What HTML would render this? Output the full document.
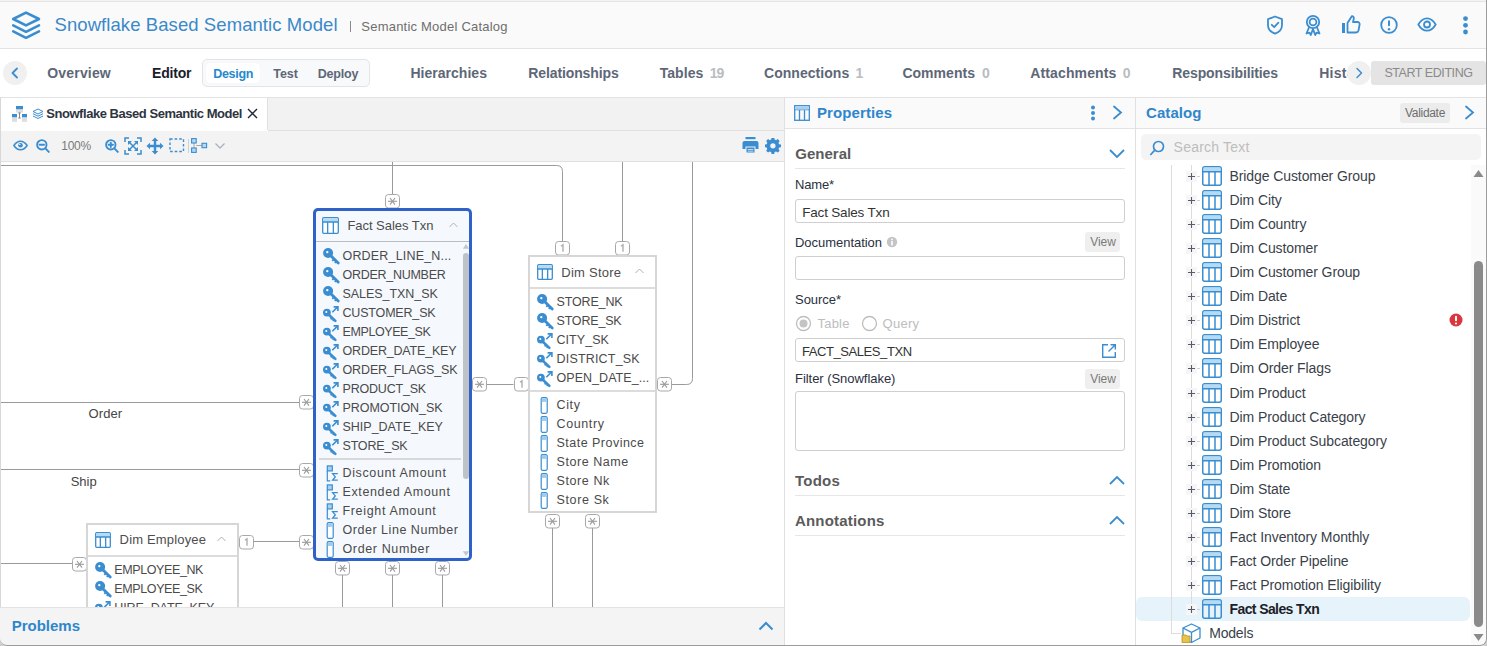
<!DOCTYPE html>
<html><head><meta charset="utf-8">
<style>
html,body{margin:0;padding:0;}
body{width:1487px;height:646px;position:relative;overflow:hidden;background:#cfcfcf;font-family:"Liberation Sans",sans-serif;}
.a{position:absolute;}
.t{position:absolute;white-space:nowrap;line-height:1;}
</style></head><body>
<div class="a" style="left:0;top:0;width:1487px;height:646px;border-radius:0 0 7px 7px;overflow:hidden;background:#fff"><div class="a" style="left:0px;top:0px;width:1487px;height:48px;background:#fafafa"></div><div class="a" style="left:0px;top:0px;width:1487px;height:1px;background:#f3f3f3"></div><div class="a" style="left:0px;top:1px;width:1487px;height:1px;background:#e4e4e4"></div><div class="a" style="left:0px;top:48px;width:1487px;height:1px;background:#e2e2e2"></div><svg class="a" style="left:11px;top:11px;" width="30" height="29" viewBox="0 0 30 29"><g fill="none" stroke="#3a8dd0" stroke-width="2.6" stroke-linejoin="round" stroke-linecap="round"><path d="M15 1.6 L28 8 L15 14.4 L2.2 8 Z"/><path d="M2.2 14.4 L15 20.8 L28 14.4"/><path d="M2.2 20.4 L15 26.8 L28 20.4"/></g></svg><div class="t" style="left:54.50px;top:16.00px;font-size:18.5px;color:#3b89c9;letter-spacing:0.079px;">Snowflake Based Semantic Model</div><div class="a" style="left:349.5px;top:20.5px;width:1.3px;height:11px;background:#8a8a8a"></div><div class="t" style="left:361.30px;top:20.00px;font-size:13px;color:#6e6e6e;letter-spacing:0.219px;">Semantic Model Catalog</div><svg class="a" style="left:1266px;top:15px;" width="18" height="20" viewBox="0 0 18 20"><g fill="none" stroke="#3a8dd0" stroke-width="1.8" stroke-linecap="round" stroke-linejoin="round"><path d="M9 1.5 L16 4.2 V10 C16 14.5 12.8 17.3 9 18.6 C5.2 17.3 2 14.5 2 10 V4.2 Z"/><path d="M5.8 9.8 L8.2 12.2 L12.4 7.6"/></g></svg><svg class="a" style="left:1304px;top:14px;" width="18" height="22" viewBox="0 0 18 22"><g fill="none" stroke="#3a8dd0" stroke-width="1.8" stroke-linecap="round" stroke-linejoin="round"><circle cx="9" cy="8" r="6.2"/><circle cx="9" cy="8" r="3.4"/><path d="M5.2 13 L2.5 19.5 L5.5 18.6 L6.8 21 L9 15"/><path d="M12.8 13 L15.5 19.5 L12.5 18.6 L11.2 21 L9 15"/></g></svg><svg class="a" style="left:1341px;top:15px;" width="20" height="19" viewBox="0 0 20 19"><g fill="#3a8dd0"><rect x="1" y="8" width="3" height="10"/></g><g fill="none" stroke="#3a8dd0" stroke-width="1.8" stroke-linecap="round" stroke-linejoin="round"><path d="M6.5 17.5 H15 C16.3 17.5 17.2 16.6 17.5 15.5 L18.6 9.6 C18.9 8.2 17.9 7 16.5 7 H12 L12.8 3.6 C13.1 2.3 12.1 1 10.8 1.2 L6.5 8 Z"/></g></svg><svg class="a" style="left:1380px;top:16px;" width="18" height="18" viewBox="0 0 18 18"><g fill="none" stroke="#3a8dd0" stroke-width="1.8" stroke-linecap="round" stroke-linejoin="round"><circle cx="9" cy="9" r="7.8"/></g><g fill="#3a8dd0"><rect x="8" y="4.3" width="2" height="6" rx="1"/><circle cx="9" cy="13.2" r="1.2"/></g></svg><svg class="a" style="left:1417px;top:17px;" width="20" height="15" viewBox="0 0 20 15"><g fill="none" stroke="#3a8dd0" stroke-width="1.8" stroke-linecap="round" stroke-linejoin="round"><path d="M1.3 7.5 C4 2.8 7 1.3 10 1.3 C13 1.3 16 2.8 18.7 7.5 C16 12.2 13 13.7 10 13.7 C7 13.7 4 12.2 1.3 7.5 Z"/><circle cx="10" cy="7.5" r="3"/></g></svg><svg class="a" style="left:1461px;top:16px;" width="9" height="19" viewBox="0 0 9 19"><g fill="#3a8dd0"><circle cx="4.5" cy="2.6" r="2.4"/><circle cx="4.5" cy="9.3" r="2.4"/><circle cx="4.5" cy="16" r="2.4"/></g></svg><div class="a" style="left:3px;top:61px;width:24px;height:24px;background:#f0f0f0;border-radius:50%"></div><svg class="a" style="left:3px;top:61px;" width="24" height="24" viewBox="0 0 24 24"><path d="M14 7.5 L9.5 12 L14 16.5" fill="none" stroke="#3a8dd0" stroke-width="1.8" stroke-linecap="round" stroke-linejoin="round"/></svg><div class="t" style="left:47.30px;top:66.00px;font-size:14px;color:#5d6777;font-weight:bold;letter-spacing:0.169px;">Overview</div><div class="t" style="left:152.00px;top:66.00px;font-size:14px;color:#1c1c2b;font-weight:bold;letter-spacing:-0.190px;">Editor</div><div class="a" style="left:202px;top:59px;width:168px;height:28px;background:#f8f9fa;border:1px solid #e2e4e8;border-radius:5px;box-sizing:border-box"></div><div class="a" style="left:206px;top:63px;width:54px;height:20px;background:#fff;border-radius:4px;box-shadow:0 0 1px rgba(0,0,0,0.08)"></div><div class="t" style="left:213.30px;top:68.00px;font-size:12.5px;color:#2688cc;font-weight:bold;letter-spacing:-0.331px;">Design</div><div class="t" style="left:273.20px;top:68.00px;font-size:12.5px;color:#5d6777;font-weight:bold;letter-spacing:-0.020px;">Test</div><div class="t" style="left:317.80px;top:68.00px;font-size:12.5px;color:#5d6777;font-weight:bold;letter-spacing:-0.215px;">Deploy</div><div class="t" style="left:410.40px;top:66.00px;font-size:14px;color:#5d6777;font-weight:bold;letter-spacing:0.032px;">Hierarchies</div><div class="t" style="left:528.30px;top:66.00px;font-size:14px;color:#5d6777;font-weight:bold;letter-spacing:-0.119px;">Relationships</div><div class="t" style="left:659.70px;top:66.00px;font-size:14px;color:#5d6777;font-weight:bold;letter-spacing:0.067px;">Tables</div><div class="t" style="left:709.70px;top:66.00px;font-size:14px;color:#b9bcc2;font-weight:bold;letter-spacing:-0.931px;">19</div><div class="t" style="left:764.00px;top:66.00px;font-size:14px;color:#5d6777;font-weight:bold;letter-spacing:0.042px;">Connections</div><div class="t" style="left:855.50px;top:66.00px;font-size:14px;color:#b9bcc2;font-weight:bold;">1</div><div class="t" style="left:902.40px;top:66.00px;font-size:14px;color:#5d6777;font-weight:bold;letter-spacing:0.034px;">Comments</div><div class="t" style="left:982.00px;top:66.00px;font-size:14px;color:#b9bcc2;font-weight:bold;">0</div><div class="t" style="left:1030.30px;top:66.00px;font-size:14px;color:#5d6777;font-weight:bold;letter-spacing:0.123px;">Attachments</div><div class="t" style="left:1122.70px;top:66.00px;font-size:14px;color:#b9bcc2;font-weight:bold;">0</div><div class="t" style="left:1172.30px;top:66.00px;font-size:14px;color:#5d6777;font-weight:bold;letter-spacing:-0.107px;">Responsibilities</div><div class="a" style="left:1319px;top:55px;width:29px;height:35px;overflow:hidden"><div class="t" style="left:0.20px;top:11.00px;font-size:14px;color:#5d6777;font-weight:bold;letter-spacing:0.254px;">History</div></div><div class="a" style="left:1347px;top:61px;width:24px;height:24px;background:#f0f0f0;border-radius:50%"></div><svg class="a" style="left:1347px;top:61px;" width="24" height="24" viewBox="0 0 24 24"><path d="M10 7.5 L14.5 12 L10 16.5" fill="none" stroke="#3a8dd0" stroke-width="1.5" stroke-linecap="round" stroke-linejoin="round"/></svg><div class="a" style="left:1371px;top:61px;width:115px;height:24px;background:#e4e4e4;border-radius:3px"></div><div class="t" style="left:1384.40px;top:67.00px;font-size:12.5px;color:#8a8a8a;letter-spacing:-0.432px;">START EDITING</div><div class="a" style="left:0px;top:97px;width:785px;height:1px;background:#e3e3e3"></div><div class="a" style="left:0px;top:98px;width:785px;height:32px;background:#f2f2f2"></div><div class="a" style="left:0px;top:130px;width:785px;height:1px;background:#e0e0e0"></div><div class="a" style="left:1px;top:98px;width:267px;height:33px;background:#fff"></div><div class="a" style="left:267px;top:98px;width:1px;height:32px;background:#e0e0e0"></div><svg class="a" style="left:11px;top:105px;" width="17" height="18" viewBox="0 0 17 18"><g fill="#3a8dd0"><rect x="5" y="1" width="7" height="3.5"/><rect x="1" y="9" width="5" height="3.5"/><rect x="11" y="9" width="5" height="3.5"/></g><g fill="#dedede"><rect x="5" y="4.5" width="7" height="3"/><rect x="1" y="12.5" width="5" height="4.3"/><rect x="11" y="12.5" width="5" height="4.3"/></g><path d="M8.5 7.5 V13 M7.2 8 H9.8 M7.2 13 H9.8" stroke="#8a8a8a" stroke-width="1" fill="none"/></svg><svg class="a" style="left:32px;top:108px;" width="12" height="12" viewBox="0 0 12 12"><g fill="none" stroke="#3a8dd0" stroke-width="1" stroke-linejoin="round"><path d="M6 1 L11 3.5 L6 6 L1 3.5 Z"/><path d="M1 5.7 L6 8.2 L11 5.7"/><path d="M1 8 L6 10.5 L11 8"/></g></svg><div class="t" style="left:46.30px;top:107.00px;font-size:13px;color:#2e3440;font-weight:bold;letter-spacing:-0.461px;">Snowflake Based Semantic Model</div><svg class="a" style="left:247px;top:108px;" width="11" height="11" viewBox="0 0 11 11"><path d="M1 1 L10 10 M10 1 L1 10" stroke="#1e2533" stroke-width="1.4" fill="none"/></svg><div class="a" style="left:0px;top:131px;width:785px;height:30px;background:#f3f3f3"></div><div class="a" style="left:0px;top:161px;width:785px;height:1px;background:#e0e0e0"></div><svg class="a" style="left:13px;top:140px;" width="15" height="11" viewBox="0 0 15 11"><g fill="none" stroke="#3a8dd0" stroke-width="1.6" stroke-linejoin="round"><path d="M0.9 5.5 C3.2 2 5.5 1.2 7.5 1.2 C9.5 1.2 11.8 2 14.1 5.5 C11.8 9 9.5 9.8 7.5 9.8 C5.5 9.8 3.2 9 0.9 5.5 Z"/></g><circle cx="7.5" cy="5.2" r="2.3" fill="#3a8dd0"/><circle cx="6.8" cy="4.4" r="0.7" fill="#fff"/></svg><svg class="a" style="left:36px;top:139px;" width="14" height="14" viewBox="0 0 14 14"><g fill="none" stroke="#3a8dd0" stroke-width="1.9" stroke-linecap="round"><circle cx="5.8" cy="5.8" r="4.7"/><path d="M3.6 5.8 H8 M9.4 9.4 L12.8 12.9"/></g></svg><div class="t" style="left:61.30px;top:140.00px;font-size:12px;color:#7a7a7a;letter-spacing:-0.272px;">100%</div><svg class="a" style="left:105px;top:139px;" width="14" height="14" viewBox="0 0 14 14"><g fill="none" stroke="#3a8dd0" stroke-width="1.9" stroke-linecap="round"><circle cx="5.8" cy="5.8" r="4.7"/><path d="M3.6 5.8 H8 M5.8 3.6 V8 M9.4 9.4 L12.8 12.9"/></g></svg><svg class="a" style="left:124px;top:137px;" width="18" height="18" viewBox="0 0 18 18"><g fill="none" stroke="#3a8dd0" stroke-width="1.5"><path d="M1 5 V1 H5 M13 1 H17 V5 M17 13 V17 H13 M5 17 H1 V13"/><path d="M4.5 4.5 L13.5 13.5 M13.5 4.5 L4.5 13.5"/></g><g fill="#3a8dd0"><path d="M4 4 H8 L4 8 Z M14 4 V8 L10 4 Z M14 14 H10 L14 10 Z M4 14 V10 L8 14 Z"/></g></svg><svg class="a" style="left:146px;top:137px;" width="18" height="18" viewBox="0 0 18 18"><g fill="#3a8dd0"><path d="M9 0.5 L12.3 4 H10.2 V7.8 H14 V5.7 L17.5 9 L14 12.3 V10.2 H10.2 V14 H12.3 L9 17.5 L5.7 14 H7.8 V10.2 H4 V12.3 L0.5 9 L4 5.7 V7.8 H7.8 V4 H5.7 Z"/></g></svg><svg class="a" style="left:169px;top:138px;" width="16" height="15" viewBox="0 0 16 15"><rect x="1" y="1" width="13.5" height="12.5" fill="none" stroke="#3a8dd0" stroke-width="1.4" stroke-dasharray="2.6 2"/></svg><div class="a" style="left:188px;top:139px;width:1px;height:14px;background:#d0d0d0"></div><svg class="a" style="left:191px;top:138px;" width="17" height="15" viewBox="0 0 17 15"><path d="M3 5 V10 M5.3 7.5 H11" stroke="#a8a8a8" stroke-width="1" fill="none"/><g fill="#b5daf4" stroke="#3a8dd0" stroke-width="1.1"><rect x="0.6" y="0.6" width="4.6" height="4.4"/><rect x="0.6" y="10" width="4.6" height="4.4"/><rect x="11" y="5.3" width="4.6" height="4.4"/></g></svg><svg class="a" style="left:214px;top:142px;" width="12" height="8" viewBox="0 0 12 8"><path d="M1.5 1.5 L6 6 L10.5 1.5" fill="none" stroke="#aab2bd" stroke-width="1.3"/></svg><svg class="a" style="left:742px;top:137px;" width="17" height="16" viewBox="0 0 17 16"><g fill="#3a8dd0"><rect x="3.5" y="0" width="10" height="2.2"/><path d="M0.5 6 Q0.5 4 2.5 4 H14.5 Q16.5 4 16.5 6 V12 H13.5 V9.5 H3.5 V12 H0.5 Z"/><path d="M4.5 10.5 H12.5 V15.5 H4.5 Z M5.7 12 V12.8 H11.3 V12 Z M5.7 13.8 V14.4 H11.3 V13.8 Z" fill-rule="evenodd"/></g></svg><svg class="a" style="left:765px;top:138px;" width="16" height="16" viewBox="0 0 16 16"><g fill="#3a8dd0"><path fill-rule="evenodd" d="M6.6 0.5 H9.4 L9.8 2.6 L11.3 3.3 L13.1 2.1 L15.1 4.1 L13.9 5.9 L14.5 7.4 L16.5 7.8 V10.6 L14.5 11 L13.9 12.5 L15.1 14.3 L13.1 16.3 L11.3 15.1 L9.8 15.7 L9.4 17.7 H6.6 L6.2 15.7 L4.7 15.1 L2.9 16.3 L0.9 14.3 L2.1 12.5 L1.5 11 L-0.5 10.6 V7.8 L1.5 7.4 L2.1 5.9 L0.9 4.1 L2.9 2.1 L4.7 3.3 L6.2 2.6 Z M8 6.4 A2.8 2.8 0 1 0 8 12 A2.8 2.8 0 1 0 8 6.4 Z" transform="translate(0.3,-0.9) scale(0.95)"/></g></svg><div class="a" style="left:0px;top:97px;width:1px;height:549px;background:#d8d8d8"></div><div class="a" style="left:0px;top:607px;width:785px;height:39px;background:#f4f4f4"></div><div class="a" style="left:0px;top:607px;width:785px;height:1px;background:#e3e3e3"></div><div class="t" style="left:11.70px;top:618.00px;font-size:15px;color:#2f86cc;font-weight:bold;letter-spacing:-0.007px;">Problems</div><svg class="a" style="left:757px;top:619px;" width="18" height="13" viewBox="0 0 18 13"><path d="M2.5 10.5 L9 4 L15.5 10.5" fill="none" stroke="#3a8dd0" stroke-width="2"/></svg><div class="a" style="left:784px;top:97px;width:1px;height:549px;background:#e0e0e0"></div><div class="a" style="left:785px;top:97px;width:350px;height:1px;background:#e3e3e3"></div><div class="a" style="left:785px;top:98px;width:350px;height:30px;background:#fafafa"></div><div class="a" style="left:785px;top:128px;width:350px;height:1px;background:#e3e3e3"></div><svg class="a" style="left:794px;top:105px;" width="16" height="16" viewBox="0 0 16 16"><g fill="none" stroke="#3a8dd0" stroke-width="1.3"><rect x="0.7" y="0.7" width="14.6" height="14.6"/><path d="M0.7 4.7 H15.3 M5.5 4.7 V15.3 M10.5 4.7 V15.3"/></g><rect x="1.3" y="1.3" width="13.4" height="3.4" fill="#a8d0f0"/></svg><div class="t" style="left:817.00px;top:105.00px;font-size:15px;color:#2f86cc;font-weight:bold;letter-spacing:0.100px;">Properties</div><svg class="a" style="left:1089px;top:105px;" width="8" height="16" viewBox="0 0 8 16"><g fill="#3a8dd0"><circle cx="4" cy="2.5" r="2"/><circle cx="4" cy="8" r="2"/><circle cx="4" cy="13.5" r="2"/></g></svg><svg class="a" style="left:1111px;top:104px;" width="14" height="17" viewBox="0 0 14 17"><path d="M3 2.5 L10 8.5 L3 14.5" fill="none" stroke="#3a8dd0" stroke-width="1.8" stroke-linecap="round"/></svg><div class="t" style="left:795.20px;top:146.00px;font-size:15px;color:#5b5b5b;font-weight:bold;letter-spacing:0.032px;">General</div><svg class="a" style="left:1108px;top:147px;" width="18" height="12" viewBox="0 0 18 12"><path d="M2 3 L9 10 L16 3" fill="none" stroke="#3a8dd0" stroke-width="1.8"/></svg><div class="a" style="left:795px;top:168px;width:330px;height:1px;background:#e6e6e6"></div><div class="t" style="left:795.00px;top:178.00px;font-size:13px;color:#2a3140;letter-spacing:-0.150px;">Name*</div><div class="a" style="left:795px;top:199px;width:330px;height:24px;border:1px solid #cfcfcf;border-radius:3px;box-sizing:border-box;background:#fff"></div><div class="t" style="left:802.20px;top:206.00px;font-size:13.5px;color:#333;letter-spacing:-0.179px;">Fact Sales Txn</div><div class="t" style="left:795.00px;top:236.00px;font-size:13px;color:#2a3140;letter-spacing:-0.036px;">Documentation</div><svg class="a" style="left:886px;top:236px;" width="12" height="12" viewBox="0 0 12 12"><circle cx="6" cy="6" r="5.2" fill="#c4c4c4"/><rect x="5.2" y="5" width="1.6" height="4.5" fill="#fff"/><circle cx="6" cy="3.3" r="0.9" fill="#fff"/></svg><div class="a" style="left:1085px;top:232px;width:35px;height:20px;background:#efefef;border-radius:3px"></div><div class="t" style="left:1090.30px;top:236.00px;font-size:12px;color:#7a7a7a;letter-spacing:-0.074px;">View</div><div class="a" style="left:795px;top:256px;width:330px;height:24px;border:1px solid #cfcfcf;border-radius:3px;box-sizing:border-box;background:#fff"></div><div class="t" style="left:795.00px;top:293.00px;font-size:13px;color:#2a3140;letter-spacing:-0.038px;">Source*</div><svg class="a" style="left:795px;top:315px;" width="17" height="17" viewBox="0 0 17 17"><circle cx="8.5" cy="8.5" r="7" fill="#fff" stroke="#bdbdbd" stroke-width="1.3"/><circle cx="8.5" cy="8.5" r="4" fill="#c4c4c4"/></svg><div class="t" style="left:817.50px;top:317.00px;font-size:13px;color:#bdbdbd;letter-spacing:0.221px;">Table</div><svg class="a" style="left:861px;top:315px;" width="17" height="17" viewBox="0 0 17 17"><circle cx="8.5" cy="8.5" r="7" fill="#fff" stroke="#bdbdbd" stroke-width="1.3"/></svg><div class="t" style="left:882.60px;top:317.00px;font-size:13px;color:#bdbdbd;letter-spacing:0.279px;">Query</div><div class="a" style="left:795px;top:338px;width:330px;height:24px;border:1px solid #cfcfcf;border-radius:3px;box-sizing:border-box;background:#fff"></div><div class="t" style="left:802.00px;top:345.00px;font-size:13px;color:#333;letter-spacing:-0.429px;">FACT_SALES_TXN</div><svg class="a" style="left:1101px;top:343px;" width="16" height="16" viewBox="0 0 16 16"><g fill="none" stroke="#3a8dd0" stroke-width="1.4"><path d="M7 1.7 H1.7 V14.3 H14.3 V9"/><path d="M9.5 1.7 H14.3 V6.5 M14.3 1.7 L7.5 8.5"/></g></svg><div class="t" style="left:795.00px;top:372.00px;font-size:13px;color:#2a3140;letter-spacing:-0.042px;">Filter (Snowflake)</div><div class="a" style="left:1085px;top:369px;width:35px;height:20px;background:#efefef;border-radius:3px"></div><div class="t" style="left:1090.30px;top:373.00px;font-size:12px;color:#7a7a7a;letter-spacing:-0.074px;">View</div><div class="a" style="left:795px;top:391px;width:330px;height:60px;border:1px solid #cfcfcf;border-radius:3px;box-sizing:border-box;background:#fff"></div><div class="t" style="left:795.00px;top:473.00px;font-size:15px;color:#5b5b5b;font-weight:bold;letter-spacing:0.228px;">Todos</div><svg class="a" style="left:1108px;top:474px;" width="18" height="13" viewBox="0 0 18 13"><path d="M2 10 L9 3 L16 10" fill="none" stroke="#3a8dd0" stroke-width="1.8"/></svg><div class="a" style="left:795px;top:495px;width:330px;height:1px;background:#e6e6e6"></div><div class="t" style="left:795.00px;top:513.00px;font-size:15px;color:#5b5b5b;font-weight:bold;letter-spacing:0.185px;">Annotations</div><svg class="a" style="left:1108px;top:514px;" width="18" height="13" viewBox="0 0 18 13"><path d="M2 10 L9 3 L16 10" fill="none" stroke="#3a8dd0" stroke-width="1.8"/></svg><div class="a" style="left:795px;top:535px;width:330px;height:1px;background:#e6e6e6"></div><div class="a" style="left:1135px;top:97px;width:1px;height:549px;background:#e0e0e0"></div><div class="a" style="left:1136px;top:97px;width:350px;height:1px;background:#e3e3e3"></div><div class="a" style="left:1136px;top:98px;width:350px;height:30px;background:#fafafa"></div><div class="a" style="left:1136px;top:128px;width:350px;height:1px;background:#e3e3e3"></div><div class="t" style="left:1146.00px;top:105.00px;font-size:15px;color:#2f86cc;font-weight:bold;letter-spacing:0.071px;">Catalog</div><div class="a" style="left:1400px;top:103px;width:50px;height:20px;background:#ececec;border-radius:3px"></div><div class="t" style="left:1405.00px;top:107.00px;font-size:12px;color:#6e6e6e;letter-spacing:-0.309px;">Validate</div><svg class="a" style="left:1463px;top:104px;" width="13" height="17" viewBox="0 0 13 17"><path d="M3 2.5 L10 8.5 L3 14.5" fill="none" stroke="#3a8dd0" stroke-width="1.8" stroke-linecap="round"/></svg><div class="a" style="left:1141px;top:134px;width:340px;height:26px;background:#f4f4f4;border-radius:5px"></div><svg class="a" style="left:1149px;top:140px;" width="16" height="16" viewBox="0 0 16 16"><g fill="none" stroke="#3a8dd0" stroke-width="1.7" stroke-linecap="round"><circle cx="9.5" cy="6.5" r="5"/><path d="M5.8 10.2 L1.8 14.5"/></g></svg><div class="t" style="left:1173.60px;top:140.00px;font-size:14px;color:#bdbdbd;letter-spacing:0.213px;">Search Text</div><div class="a" style="left:1471px;top:165px;width:15px;height:481px;background:#fafafa"></div><svg class="a" style="left:1473px;top:169px;" width="11" height="9" viewBox="0 0 11 9"><path d="M5.5 1 L10.5 8 H0.5 Z" fill="#8a8a8a"/></svg><div class="a" style="left:1474px;top:261px;width:9px;height:366px;background:#8a8a8a;border-radius:5px"></div><svg class="a" style="left:1473px;top:633px;" width="11" height="9" viewBox="0 0 11 9"><path d="M5.5 8 L10.5 1 H0.5 Z" fill="#8a8a8a"/></svg><div class="a" style="left:1136px;top:597px;width:334px;height:24px;background:#e6f3fb;border-radius:6px"></div><div class="a" style="left:1171px;top:165px;width:1px;height:469px;background:#dcdcdc"></div><div class="a" style="left:1171px;top:633px;width:10px;height:1px;background:#dcdcdc"></div><div class="a" style="left:1191px;top:165px;width:1px;height:444px;background:#dcdcdc"></div><div class="a" style="left:1186px;top:171px;width:11px;height:11px;background:#f6f6f6"></div><svg class="a" style="left:1186px;top:171px;" width="16" height="11" viewBox="0 0 16 11"><path d="M2 5.5 H9 M5.5 2 V9" stroke="#555c6a" stroke-width="1.1"/><path d="M11 5.5 H14" stroke="#d0d0d0" stroke-width="1"/></svg><svg class="a" style="left:1202px;top:166px;" width="20" height="20" viewBox="0 0 20 20"><rect x="0.75" y="0.75" width="18.5" height="18.5" rx="2" fill="none" stroke="#3a8dd0" stroke-width="1.5"/><rect x="1.5" y="1.5" width="17" height="4.2" fill="#b5daf4"/><path d="M0.75 5.8 H19.25 M7 5.8 V19.25 M13 5.8 V19.25" stroke="#3a8dd0" stroke-width="1.5"/></svg><div class="t" style="left:1229.50px;top:169.00px;font-size:14px;color:#3a3f4a;letter-spacing:-0.090px;">Bridge Customer Group</div><div class="a" style="left:1186px;top:195px;width:11px;height:11px;background:#f6f6f6"></div><svg class="a" style="left:1186px;top:195px;" width="16" height="11" viewBox="0 0 16 11"><path d="M2 5.5 H9 M5.5 2 V9" stroke="#555c6a" stroke-width="1.1"/><path d="M11 5.5 H14" stroke="#d0d0d0" stroke-width="1"/></svg><svg class="a" style="left:1202px;top:190px;" width="20" height="20" viewBox="0 0 20 20"><rect x="0.75" y="0.75" width="18.5" height="18.5" rx="2" fill="none" stroke="#3a8dd0" stroke-width="1.5"/><rect x="1.5" y="1.5" width="17" height="4.2" fill="#b5daf4"/><path d="M0.75 5.8 H19.25 M7 5.8 V19.25 M13 5.8 V19.25" stroke="#3a8dd0" stroke-width="1.5"/></svg><div class="t" style="left:1229.50px;top:193.00px;font-size:14px;color:#3a3f4a;letter-spacing:-0.085px;">Dim City</div><div class="a" style="left:1186px;top:219px;width:11px;height:11px;background:#f6f6f6"></div><svg class="a" style="left:1186px;top:219px;" width="16" height="11" viewBox="0 0 16 11"><path d="M2 5.5 H9 M5.5 2 V9" stroke="#555c6a" stroke-width="1.1"/><path d="M11 5.5 H14" stroke="#d0d0d0" stroke-width="1"/></svg><svg class="a" style="left:1202px;top:214px;" width="20" height="20" viewBox="0 0 20 20"><rect x="0.75" y="0.75" width="18.5" height="18.5" rx="2" fill="none" stroke="#3a8dd0" stroke-width="1.5"/><rect x="1.5" y="1.5" width="17" height="4.2" fill="#b5daf4"/><path d="M0.75 5.8 H19.25 M7 5.8 V19.25 M13 5.8 V19.25" stroke="#3a8dd0" stroke-width="1.5"/></svg><div class="t" style="left:1229.50px;top:217.00px;font-size:14px;color:#3a3f4a;letter-spacing:-0.091px;">Dim Country</div><div class="a" style="left:1186px;top:243px;width:11px;height:11px;background:#f6f6f6"></div><svg class="a" style="left:1186px;top:243px;" width="16" height="11" viewBox="0 0 16 11"><path d="M2 5.5 H9 M5.5 2 V9" stroke="#555c6a" stroke-width="1.1"/><path d="M11 5.5 H14" stroke="#d0d0d0" stroke-width="1"/></svg><svg class="a" style="left:1202px;top:238px;" width="20" height="20" viewBox="0 0 20 20"><rect x="0.75" y="0.75" width="18.5" height="18.5" rx="2" fill="none" stroke="#3a8dd0" stroke-width="1.5"/><rect x="1.5" y="1.5" width="17" height="4.2" fill="#b5daf4"/><path d="M0.75 5.8 H19.25 M7 5.8 V19.25 M13 5.8 V19.25" stroke="#3a8dd0" stroke-width="1.5"/></svg><div class="t" style="left:1229.50px;top:241.00px;font-size:14px;color:#3a3f4a;letter-spacing:-0.096px;">Dim Customer</div><div class="a" style="left:1186px;top:267px;width:11px;height:11px;background:#f6f6f6"></div><svg class="a" style="left:1186px;top:267px;" width="16" height="11" viewBox="0 0 16 11"><path d="M2 5.5 H9 M5.5 2 V9" stroke="#555c6a" stroke-width="1.1"/><path d="M11 5.5 H14" stroke="#d0d0d0" stroke-width="1"/></svg><svg class="a" style="left:1202px;top:262px;" width="20" height="20" viewBox="0 0 20 20"><rect x="0.75" y="0.75" width="18.5" height="18.5" rx="2" fill="none" stroke="#3a8dd0" stroke-width="1.5"/><rect x="1.5" y="1.5" width="17" height="4.2" fill="#b5daf4"/><path d="M0.75 5.8 H19.25 M7 5.8 V19.25 M13 5.8 V19.25" stroke="#3a8dd0" stroke-width="1.5"/></svg><div class="t" style="left:1229.50px;top:265.00px;font-size:14px;color:#3a3f4a;letter-spacing:-0.094px;">Dim Customer Group</div><div class="a" style="left:1186px;top:291px;width:11px;height:11px;background:#f6f6f6"></div><svg class="a" style="left:1186px;top:291px;" width="16" height="11" viewBox="0 0 16 11"><path d="M2 5.5 H9 M5.5 2 V9" stroke="#555c6a" stroke-width="1.1"/><path d="M11 5.5 H14" stroke="#d0d0d0" stroke-width="1"/></svg><svg class="a" style="left:1202px;top:286px;" width="20" height="20" viewBox="0 0 20 20"><rect x="0.75" y="0.75" width="18.5" height="18.5" rx="2" fill="none" stroke="#3a8dd0" stroke-width="1.5"/><rect x="1.5" y="1.5" width="17" height="4.2" fill="#b5daf4"/><path d="M0.75 5.8 H19.25 M7 5.8 V19.25 M13 5.8 V19.25" stroke="#3a8dd0" stroke-width="1.5"/></svg><div class="t" style="left:1229.50px;top:289.00px;font-size:14px;color:#3a3f4a;letter-spacing:-0.094px;">Dim Date</div><div class="a" style="left:1186px;top:315px;width:11px;height:11px;background:#f6f6f6"></div><svg class="a" style="left:1186px;top:315px;" width="16" height="11" viewBox="0 0 16 11"><path d="M2 5.5 H9 M5.5 2 V9" stroke="#555c6a" stroke-width="1.1"/><path d="M11 5.5 H14" stroke="#d0d0d0" stroke-width="1"/></svg><svg class="a" style="left:1202px;top:310px;" width="20" height="20" viewBox="0 0 20 20"><rect x="0.75" y="0.75" width="18.5" height="18.5" rx="2" fill="none" stroke="#3a8dd0" stroke-width="1.5"/><rect x="1.5" y="1.5" width="17" height="4.2" fill="#b5daf4"/><path d="M0.75 5.8 H19.25 M7 5.8 V19.25 M13 5.8 V19.25" stroke="#3a8dd0" stroke-width="1.5"/></svg><div class="t" style="left:1229.50px;top:313.00px;font-size:14px;color:#3a3f4a;letter-spacing:-0.077px;">Dim District</div><div class="a" style="left:1186px;top:339px;width:11px;height:11px;background:#f6f6f6"></div><svg class="a" style="left:1186px;top:339px;" width="16" height="11" viewBox="0 0 16 11"><path d="M2 5.5 H9 M5.5 2 V9" stroke="#555c6a" stroke-width="1.1"/><path d="M11 5.5 H14" stroke="#d0d0d0" stroke-width="1"/></svg><svg class="a" style="left:1202px;top:334px;" width="20" height="20" viewBox="0 0 20 20"><rect x="0.75" y="0.75" width="18.5" height="18.5" rx="2" fill="none" stroke="#3a8dd0" stroke-width="1.5"/><rect x="1.5" y="1.5" width="17" height="4.2" fill="#b5daf4"/><path d="M0.75 5.8 H19.25 M7 5.8 V19.25 M13 5.8 V19.25" stroke="#3a8dd0" stroke-width="1.5"/></svg><div class="t" style="left:1229.50px;top:337.00px;font-size:14px;color:#3a3f4a;letter-spacing:-0.097px;">Dim Employee</div><div class="a" style="left:1186px;top:363px;width:11px;height:11px;background:#f6f6f6"></div><svg class="a" style="left:1186px;top:363px;" width="16" height="11" viewBox="0 0 16 11"><path d="M2 5.5 H9 M5.5 2 V9" stroke="#555c6a" stroke-width="1.1"/><path d="M11 5.5 H14" stroke="#d0d0d0" stroke-width="1"/></svg><svg class="a" style="left:1202px;top:358px;" width="20" height="20" viewBox="0 0 20 20"><rect x="0.75" y="0.75" width="18.5" height="18.5" rx="2" fill="none" stroke="#3a8dd0" stroke-width="1.5"/><rect x="1.5" y="1.5" width="17" height="4.2" fill="#b5daf4"/><path d="M0.75 5.8 H19.25 M7 5.8 V19.25 M13 5.8 V19.25" stroke="#3a8dd0" stroke-width="1.5"/></svg><div class="t" style="left:1229.50px;top:361.00px;font-size:14px;color:#3a3f4a;letter-spacing:-0.088px;">Dim Order Flags</div><div class="a" style="left:1186px;top:388px;width:11px;height:11px;background:#f6f6f6"></div><svg class="a" style="left:1186px;top:388px;" width="16" height="11" viewBox="0 0 16 11"><path d="M2 5.5 H9 M5.5 2 V9" stroke="#555c6a" stroke-width="1.1"/><path d="M11 5.5 H14" stroke="#d0d0d0" stroke-width="1"/></svg><svg class="a" style="left:1202px;top:383px;" width="20" height="20" viewBox="0 0 20 20"><rect x="0.75" y="0.75" width="18.5" height="18.5" rx="2" fill="none" stroke="#3a8dd0" stroke-width="1.5"/><rect x="1.5" y="1.5" width="17" height="4.2" fill="#b5daf4"/><path d="M0.75 5.8 H19.25 M7 5.8 V19.25 M13 5.8 V19.25" stroke="#3a8dd0" stroke-width="1.5"/></svg><div class="t" style="left:1229.50px;top:386.00px;font-size:14px;color:#3a3f4a;letter-spacing:-0.090px;">Dim Product</div><div class="a" style="left:1186px;top:412px;width:11px;height:11px;background:#f6f6f6"></div><svg class="a" style="left:1186px;top:412px;" width="16" height="11" viewBox="0 0 16 11"><path d="M2 5.5 H9 M5.5 2 V9" stroke="#555c6a" stroke-width="1.1"/><path d="M11 5.5 H14" stroke="#d0d0d0" stroke-width="1"/></svg><svg class="a" style="left:1202px;top:407px;" width="20" height="20" viewBox="0 0 20 20"><rect x="0.75" y="0.75" width="18.5" height="18.5" rx="2" fill="none" stroke="#3a8dd0" stroke-width="1.5"/><rect x="1.5" y="1.5" width="17" height="4.2" fill="#b5daf4"/><path d="M0.75 5.8 H19.25 M7 5.8 V19.25 M13 5.8 V19.25" stroke="#3a8dd0" stroke-width="1.5"/></svg><div class="t" style="left:1229.50px;top:410.00px;font-size:14px;color:#3a3f4a;letter-spacing:-0.088px;">Dim Product Category</div><div class="a" style="left:1186px;top:436px;width:11px;height:11px;background:#f6f6f6"></div><svg class="a" style="left:1186px;top:436px;" width="16" height="11" viewBox="0 0 16 11"><path d="M2 5.5 H9 M5.5 2 V9" stroke="#555c6a" stroke-width="1.1"/><path d="M11 5.5 H14" stroke="#d0d0d0" stroke-width="1"/></svg><svg class="a" style="left:1202px;top:431px;" width="20" height="20" viewBox="0 0 20 20"><rect x="0.75" y="0.75" width="18.5" height="18.5" rx="2" fill="none" stroke="#3a8dd0" stroke-width="1.5"/><rect x="1.5" y="1.5" width="17" height="4.2" fill="#b5daf4"/><path d="M0.75 5.8 H19.25 M7 5.8 V19.25 M13 5.8 V19.25" stroke="#3a8dd0" stroke-width="1.5"/></svg><div class="t" style="left:1229.50px;top:434.00px;font-size:14px;color:#3a3f4a;letter-spacing:-0.089px;">Dim Product Subcategory</div><div class="a" style="left:1186px;top:460px;width:11px;height:11px;background:#f6f6f6"></div><svg class="a" style="left:1186px;top:460px;" width="16" height="11" viewBox="0 0 16 11"><path d="M2 5.5 H9 M5.5 2 V9" stroke="#555c6a" stroke-width="1.1"/><path d="M11 5.5 H14" stroke="#d0d0d0" stroke-width="1"/></svg><svg class="a" style="left:1202px;top:455px;" width="20" height="20" viewBox="0 0 20 20"><rect x="0.75" y="0.75" width="18.5" height="18.5" rx="2" fill="none" stroke="#3a8dd0" stroke-width="1.5"/><rect x="1.5" y="1.5" width="17" height="4.2" fill="#b5daf4"/><path d="M0.75 5.8 H19.25 M7 5.8 V19.25 M13 5.8 V19.25" stroke="#3a8dd0" stroke-width="1.5"/></svg><div class="t" style="left:1229.50px;top:458.00px;font-size:14px;color:#3a3f4a;letter-spacing:-0.091px;">Dim Promotion</div><div class="a" style="left:1186px;top:484px;width:11px;height:11px;background:#f6f6f6"></div><svg class="a" style="left:1186px;top:484px;" width="16" height="11" viewBox="0 0 16 11"><path d="M2 5.5 H9 M5.5 2 V9" stroke="#555c6a" stroke-width="1.1"/><path d="M11 5.5 H14" stroke="#d0d0d0" stroke-width="1"/></svg><svg class="a" style="left:1202px;top:479px;" width="20" height="20" viewBox="0 0 20 20"><rect x="0.75" y="0.75" width="18.5" height="18.5" rx="2" fill="none" stroke="#3a8dd0" stroke-width="1.5"/><rect x="1.5" y="1.5" width="17" height="4.2" fill="#b5daf4"/><path d="M0.75 5.8 H19.25 M7 5.8 V19.25 M13 5.8 V19.25" stroke="#3a8dd0" stroke-width="1.5"/></svg><div class="t" style="left:1229.50px;top:482.00px;font-size:14px;color:#3a3f4a;letter-spacing:-0.088px;">Dim State</div><div class="a" style="left:1186px;top:508px;width:11px;height:11px;background:#f6f6f6"></div><svg class="a" style="left:1186px;top:508px;" width="16" height="11" viewBox="0 0 16 11"><path d="M2 5.5 H9 M5.5 2 V9" stroke="#555c6a" stroke-width="1.1"/><path d="M11 5.5 H14" stroke="#d0d0d0" stroke-width="1"/></svg><svg class="a" style="left:1202px;top:503px;" width="20" height="20" viewBox="0 0 20 20"><rect x="0.75" y="0.75" width="18.5" height="18.5" rx="2" fill="none" stroke="#3a8dd0" stroke-width="1.5"/><rect x="1.5" y="1.5" width="17" height="4.2" fill="#b5daf4"/><path d="M0.75 5.8 H19.25 M7 5.8 V19.25 M13 5.8 V19.25" stroke="#3a8dd0" stroke-width="1.5"/></svg><div class="t" style="left:1229.50px;top:506.00px;font-size:14px;color:#3a3f4a;letter-spacing:-0.089px;">Dim Store</div><div class="a" style="left:1186px;top:532px;width:11px;height:11px;background:#f6f6f6"></div><svg class="a" style="left:1186px;top:532px;" width="16" height="11" viewBox="0 0 16 11"><path d="M2 5.5 H9 M5.5 2 V9" stroke="#555c6a" stroke-width="1.1"/><path d="M11 5.5 H14" stroke="#d0d0d0" stroke-width="1"/></svg><svg class="a" style="left:1202px;top:527px;" width="20" height="20" viewBox="0 0 20 20"><rect x="0.75" y="0.75" width="18.5" height="18.5" rx="2" fill="none" stroke="#3a8dd0" stroke-width="1.5"/><rect x="1.5" y="1.5" width="17" height="4.2" fill="#b5daf4"/><path d="M0.75 5.8 H19.25 M7 5.8 V19.25 M13 5.8 V19.25" stroke="#3a8dd0" stroke-width="1.5"/></svg><div class="t" style="left:1229.50px;top:530.00px;font-size:14px;color:#3a3f4a;letter-spacing:-0.083px;">Fact Inventory Monthly</div><div class="a" style="left:1186px;top:556px;width:11px;height:11px;background:#f6f6f6"></div><svg class="a" style="left:1186px;top:556px;" width="16" height="11" viewBox="0 0 16 11"><path d="M2 5.5 H9 M5.5 2 V9" stroke="#555c6a" stroke-width="1.1"/><path d="M11 5.5 H14" stroke="#d0d0d0" stroke-width="1"/></svg><svg class="a" style="left:1202px;top:551px;" width="20" height="20" viewBox="0 0 20 20"><rect x="0.75" y="0.75" width="18.5" height="18.5" rx="2" fill="none" stroke="#3a8dd0" stroke-width="1.5"/><rect x="1.5" y="1.5" width="17" height="4.2" fill="#b5daf4"/><path d="M0.75 5.8 H19.25 M7 5.8 V19.25 M13 5.8 V19.25" stroke="#3a8dd0" stroke-width="1.5"/></svg><div class="t" style="left:1229.50px;top:554.00px;font-size:14px;color:#3a3f4a;letter-spacing:-0.082px;">Fact Order Pipeline</div><div class="a" style="left:1186px;top:580px;width:11px;height:11px;background:#f6f6f6"></div><svg class="a" style="left:1186px;top:580px;" width="16" height="11" viewBox="0 0 16 11"><path d="M2 5.5 H9 M5.5 2 V9" stroke="#555c6a" stroke-width="1.1"/><path d="M11 5.5 H14" stroke="#d0d0d0" stroke-width="1"/></svg><svg class="a" style="left:1202px;top:575px;" width="20" height="20" viewBox="0 0 20 20"><rect x="0.75" y="0.75" width="18.5" height="18.5" rx="2" fill="none" stroke="#3a8dd0" stroke-width="1.5"/><rect x="1.5" y="1.5" width="17" height="4.2" fill="#b5daf4"/><path d="M0.75 5.8 H19.25 M7 5.8 V19.25 M13 5.8 V19.25" stroke="#3a8dd0" stroke-width="1.5"/></svg><div class="t" style="left:1229.50px;top:578.00px;font-size:14px;color:#3a3f4a;letter-spacing:-0.076px;">Fact Promotion Eligibility</div><div class="a" style="left:1186px;top:604px;width:11px;height:11px;background:#f6f6f6"></div><svg class="a" style="left:1186px;top:604px;" width="16" height="11" viewBox="0 0 16 11"><path d="M2 5.5 H9 M5.5 2 V9" stroke="#555c6a" stroke-width="1.1"/><path d="M11 5.5 H14" stroke="#d0d0d0" stroke-width="1"/></svg><svg class="a" style="left:1202px;top:599px;" width="20" height="20" viewBox="0 0 20 20"><rect x="0.75" y="0.75" width="18.5" height="18.5" rx="2" fill="none" stroke="#3a8dd0" stroke-width="1.5"/><rect x="1.5" y="1.5" width="17" height="4.2" fill="#b5daf4"/><path d="M0.75 5.8 H19.25 M7 5.8 V19.25 M13 5.8 V19.25" stroke="#3a8dd0" stroke-width="1.5"/></svg><div class="t" style="left:1229.50px;top:602.00px;font-size:14px;color:#1e1e28;font-weight:bold;letter-spacing:-0.600px;">Fact Sales Txn</div><svg class="a" style="left:1449px;top:313px;" width="14" height="14" viewBox="0 0 14 14"><circle cx="7" cy="7" r="6.5" fill="#d9363e"/><rect x="6" y="2.8" width="2" height="5.5" rx="1" fill="#fff"/><circle cx="7" cy="10.5" r="1.1" fill="#fff"/></svg><svg class="a" style="left:1181px;top:623px;" width="21" height="21" viewBox="0 0 21 21"><g fill="none" stroke="#3a8dd0" stroke-width="1.3" stroke-linejoin="round"><path d="M10.5 1 L19 5 V15 L10.5 19.5 L2 15 V5 Z"/><path d="M2 5 L10.5 9.3 L19 5 M10.5 9.3 V19.5"/></g><path d="M1 12 H5 L6 13 H9 V19.5 H1 Z" fill="#e8c24a" stroke="#b89328" stroke-width="0.8"/></svg><div class="t" style="left:1209.20px;top:626.00px;font-size:14px;color:#3a3f4a;letter-spacing:-0.185px;">Models</div><div class="a" style="left:1px;top:162px;width:783px;height:445px;overflow:hidden"><div class="a" style="left:-1px;top:-162px;width:784px;height:646px"><svg class="a" style="left:0px;top:0px;" width="784" height="646" viewBox="0 0 784 646"><g fill="none" stroke="#9a9a9a" stroke-width="1"><path d="M0 165.5 H556.5 Q562.5 165.5 562.5 171.5 V241"/><path d="M392.5 160 V194"/><path d="M622.5 160 V241"/><path d="M692.5 160 V378.5 Q692.5 384.5 686.5 384.5 H671"/><path d="M486 384.5 H513.5"/><path d="M0 402.5 H299"/><path d="M0 469.5 H299"/><path d="M253 541.5 H299.5"/><path d="M0 563.5 H72"/><path d="M342.5 574 V610"/><path d="M392.5 574 V610"/><path d="M442.5 574 V610"/><path d="M552.5 528 V610"/><path d="M592.5 528 V610"/></g></svg><svg class="a" style="left:385px;top:194px;" width="15" height="15" viewBox="0 0 15 15"><rect x="0.5" y="0.5" width="14" height="13.5" rx="3" fill="#fff" stroke="#a8a8a8" stroke-width="1"/><g stroke="#9a9a9a" stroke-width="1.1"><path d="M3 7.3 H12"/><path d="M5 4 L10 10.6 M10 4 L5 10.6"/></g></svg><svg class="a" style="left:555px;top:241px;" width="15" height="15" viewBox="0 0 15 15"><rect x="0.5" y="0.5" width="14" height="13.5" rx="3" fill="#fff" stroke="#a8a8a8" stroke-width="1"/><path d="M6 5.2 L8 3.8 V10.8" fill="none" stroke="#aaaaaa" stroke-width="1.3"/></svg><svg class="a" style="left:615px;top:241px;" width="15" height="15" viewBox="0 0 15 15"><rect x="0.5" y="0.5" width="14" height="13.5" rx="3" fill="#fff" stroke="#a8a8a8" stroke-width="1"/><path d="M6 5.2 L8 3.8 V10.8" fill="none" stroke="#aaaaaa" stroke-width="1.3"/></svg><svg class="a" style="left:657px;top:377px;" width="15" height="15" viewBox="0 0 15 15"><rect x="0.5" y="0.5" width="14" height="13.5" rx="3" fill="#fff" stroke="#a8a8a8" stroke-width="1"/><g stroke="#9a9a9a" stroke-width="1.1"><path d="M3 7.3 H12"/><path d="M5 4 L10 10.6 M10 4 L5 10.6"/></g></svg><svg class="a" style="left:471.5px;top:377px;" width="15" height="15" viewBox="0 0 15 15"><rect x="0.5" y="0.5" width="14" height="13.5" rx="3" fill="#fff" stroke="#a8a8a8" stroke-width="1"/><g stroke="#9a9a9a" stroke-width="1.1"><path d="M3 7.3 H12"/><path d="M5 4 L10 10.6 M10 4 L5 10.6"/></g></svg><svg class="a" style="left:513.5px;top:377px;" width="15" height="15" viewBox="0 0 15 15"><rect x="0.5" y="0.5" width="14" height="13.5" rx="3" fill="#fff" stroke="#a8a8a8" stroke-width="1"/><path d="M6 5.2 L8 3.8 V10.8" fill="none" stroke="#aaaaaa" stroke-width="1.3"/></svg><svg class="a" style="left:299px;top:395px;" width="15" height="15" viewBox="0 0 15 15"><rect x="0.5" y="0.5" width="14" height="13.5" rx="3" fill="#fff" stroke="#a8a8a8" stroke-width="1"/><g stroke="#9a9a9a" stroke-width="1.1"><path d="M3 7.3 H12"/><path d="M5 4 L10 10.6 M10 4 L5 10.6"/></g></svg><svg class="a" style="left:299px;top:462.5px;" width="15" height="15" viewBox="0 0 15 15"><rect x="0.5" y="0.5" width="14" height="13.5" rx="3" fill="#fff" stroke="#a8a8a8" stroke-width="1"/><g stroke="#9a9a9a" stroke-width="1.1"><path d="M3 7.3 H12"/><path d="M5 4 L10 10.6 M10 4 L5 10.6"/></g></svg><svg class="a" style="left:299px;top:534.5px;" width="15" height="15" viewBox="0 0 15 15"><rect x="0.5" y="0.5" width="14" height="13.5" rx="3" fill="#fff" stroke="#a8a8a8" stroke-width="1"/><g stroke="#9a9a9a" stroke-width="1.1"><path d="M3 7.3 H12"/><path d="M5 4 L10 10.6 M10 4 L5 10.6"/></g></svg><svg class="a" style="left:239px;top:534.5px;" width="15" height="15" viewBox="0 0 15 15"><rect x="0.5" y="0.5" width="14" height="13.5" rx="3" fill="#fff" stroke="#a8a8a8" stroke-width="1"/><path d="M6 5.2 L8 3.8 V10.8" fill="none" stroke="#aaaaaa" stroke-width="1.3"/></svg><svg class="a" style="left:71.5px;top:556.5px;" width="15" height="15" viewBox="0 0 15 15"><rect x="0.5" y="0.5" width="14" height="13.5" rx="3" fill="#fff" stroke="#a8a8a8" stroke-width="1"/><g stroke="#9a9a9a" stroke-width="1.1"><path d="M3 7.3 H12"/><path d="M5 4 L10 10.6 M10 4 L5 10.6"/></g></svg><svg class="a" style="left:335px;top:561px;" width="15" height="15" viewBox="0 0 15 15"><rect x="0.5" y="0.5" width="14" height="13.5" rx="3" fill="#fff" stroke="#a8a8a8" stroke-width="1"/><g stroke="#9a9a9a" stroke-width="1.1"><path d="M3 7.3 H12"/><path d="M5 4 L10 10.6 M10 4 L5 10.6"/></g></svg><svg class="a" style="left:385px;top:561px;" width="15" height="15" viewBox="0 0 15 15"><rect x="0.5" y="0.5" width="14" height="13.5" rx="3" fill="#fff" stroke="#a8a8a8" stroke-width="1"/><g stroke="#9a9a9a" stroke-width="1.1"><path d="M3 7.3 H12"/><path d="M5 4 L10 10.6 M10 4 L5 10.6"/></g></svg><svg class="a" style="left:435px;top:561px;" width="15" height="15" viewBox="0 0 15 15"><rect x="0.5" y="0.5" width="14" height="13.5" rx="3" fill="#fff" stroke="#a8a8a8" stroke-width="1"/><g stroke="#9a9a9a" stroke-width="1.1"><path d="M3 7.3 H12"/><path d="M5 4 L10 10.6 M10 4 L5 10.6"/></g></svg><svg class="a" style="left:545px;top:513.5px;" width="15" height="15" viewBox="0 0 15 15"><rect x="0.5" y="0.5" width="14" height="13.5" rx="3" fill="#fff" stroke="#a8a8a8" stroke-width="1"/><g stroke="#9a9a9a" stroke-width="1.1"><path d="M3 7.3 H12"/><path d="M5 4 L10 10.6 M10 4 L5 10.6"/></g></svg><svg class="a" style="left:585px;top:513.5px;" width="15" height="15" viewBox="0 0 15 15"><rect x="0.5" y="0.5" width="14" height="13.5" rx="3" fill="#fff" stroke="#a8a8a8" stroke-width="1"/><g stroke="#9a9a9a" stroke-width="1.1"><path d="M3 7.3 H12"/><path d="M5 4 L10 10.6 M10 4 L5 10.6"/></g></svg><div class="t" style="left:88.60px;top:407.00px;font-size:13px;color:#444;letter-spacing:0.093px;">Order</div><div class="t" style="left:70.70px;top:475.00px;font-size:13px;color:#444;letter-spacing:-0.008px;">Ship</div><div class="a" style="left:313px;top:208px;width:159px;height:353px;background:#f5f9fd;border:3px solid #2f62c9;border-radius:5px;box-sizing:border-box"></div><div class="a" style="left:316px;top:241px;width:153px;height:1px;background:#babec2"></div><svg class="a" style="left:322px;top:217px;" width="17" height="17" viewBox="0 0 17 17"><rect x="0.7" y="0.7" width="15.6" height="15.6" rx="1" fill="#fff" stroke="#3a8dd0" stroke-width="1.3"/><rect x="1.3" y="1.3" width="14.4" height="3.6" fill="#b5daf4"/><path d="M0.7 5 H16.3 M5.67 5 V16.3 M11.33 5 V16.3" stroke="#3a8dd0" stroke-width="1.3"/></svg><div class="t" style="left:347.40px;top:219.00px;font-size:13px;color:#4d4d4d;letter-spacing:-0.033px;">Fact Sales Txn</div><svg class="a" style="left:448px;top:221px;" width="11" height="8" viewBox="0 0 11 8"><path d="M1.5 6 L5.5 2 L9.5 6" fill="none" stroke="#b0b0b0" stroke-width="1"/></svg><svg class="a" style="left:462px;top:243px;" width="8" height="7" viewBox="0 0 8 7"><path d="M4 1 L7.2 5.8 H0.8 Z" fill="#c4c7ca"/></svg><div class="a" style="left:463px;top:253px;width:6px;height:226px;background:#bfc3c7;border-radius:3px"></div><svg class="a" style="left:462px;top:550px;" width="8" height="7" viewBox="0 0 8 7"><path d="M4 6 L7.2 1.2 H0.8 Z" fill="#c4c7ca"/></svg><svg class="a" style="left:323px;top:248.0px;" width="17" height="17" viewBox="0 0 17 17"><g fill="#3a8dd0"><circle cx="5.1" cy="5" r="5"/></g><g stroke="#3a8dd0" stroke-linecap="round" fill="none"><path d="M6.5 6.4 L15.2 15" stroke-width="2.8"/><path d="M11.2 10.9 L9.3 12.8 M13.5 13.2 L11.8 14.9" stroke-width="1.9" stroke-linecap="butt"/></g><circle cx="4.3" cy="4.2" r="1.15" fill="#fff"/></svg><div class="t" style="left:342.50px;top:250.00px;font-size:12.5px;color:#4a4a4a;letter-spacing:0.180px;">ORDER_LINE_N...</div><svg class="a" style="left:323px;top:267.0px;" width="17" height="17" viewBox="0 0 17 17"><g fill="#3a8dd0"><circle cx="5.1" cy="5" r="5"/></g><g stroke="#3a8dd0" stroke-linecap="round" fill="none"><path d="M6.5 6.4 L15.2 15" stroke-width="2.8"/><path d="M11.2 10.9 L9.3 12.8 M13.5 13.2 L11.8 14.9" stroke-width="1.9" stroke-linecap="butt"/></g><circle cx="4.3" cy="4.2" r="1.15" fill="#fff"/></svg><div class="t" style="left:342.50px;top:269.00px;font-size:12.5px;color:#4a4a4a;letter-spacing:-0.275px;">ORDER_NUMBER</div><svg class="a" style="left:323px;top:286.0px;" width="17" height="17" viewBox="0 0 17 17"><g fill="#3a8dd0"><circle cx="5.1" cy="5" r="5"/></g><g stroke="#3a8dd0" stroke-linecap="round" fill="none"><path d="M6.5 6.4 L15.2 15" stroke-width="2.8"/><path d="M11.2 10.9 L9.3 12.8 M13.5 13.2 L11.8 14.9" stroke-width="1.9" stroke-linecap="butt"/></g><circle cx="4.3" cy="4.2" r="1.15" fill="#fff"/></svg><div class="t" style="left:342.50px;top:288.00px;font-size:12.5px;color:#4a4a4a;letter-spacing:-0.045px;">SALES_TXN_SK</div><svg class="a" style="left:323px;top:305.5px;" width="17" height="17" viewBox="0 0 17 17"><g fill="#3a8dd0"><circle cx="3.9" cy="6.6" r="3.9"/></g><g stroke="#3a8dd0" stroke-linecap="round" fill="none"><path d="M5 8 L12.4 14.9" stroke-width="2.5"/><path d="M9.1 11.9 L7.6 13.4 M11 13.6 L9.7 14.9" stroke-width="1.6" stroke-linecap="butt"/></g><circle cx="3.3" cy="5.9" r="1" fill="#fff"/><g stroke="#3a8dd0" stroke-width="1.6" fill="none"><path d="M9.3 6.2 L14.7 0.9"/><path d="M10.6 0.9 H14.9 V5.1"/></g></svg><div class="t" style="left:342.50px;top:307.00px;font-size:12.5px;color:#4a4a4a;letter-spacing:-0.179px;">CUSTOMER_SK</div><svg class="a" style="left:323px;top:324.5px;" width="17" height="17" viewBox="0 0 17 17"><g fill="#3a8dd0"><circle cx="3.9" cy="6.6" r="3.9"/></g><g stroke="#3a8dd0" stroke-linecap="round" fill="none"><path d="M5 8 L12.4 14.9" stroke-width="2.5"/><path d="M9.1 11.9 L7.6 13.4 M11 13.6 L9.7 14.9" stroke-width="1.6" stroke-linecap="butt"/></g><circle cx="3.3" cy="5.9" r="1" fill="#fff"/><g stroke="#3a8dd0" stroke-width="1.6" fill="none"><path d="M9.3 6.2 L14.7 0.9"/><path d="M10.6 0.9 H14.9 V5.1"/></g></svg><div class="t" style="left:342.50px;top:326.00px;font-size:12.5px;color:#4a4a4a;letter-spacing:-0.403px;">EMPLOYEE_SK</div><svg class="a" style="left:323px;top:343.5px;" width="17" height="17" viewBox="0 0 17 17"><g fill="#3a8dd0"><circle cx="3.9" cy="6.6" r="3.9"/></g><g stroke="#3a8dd0" stroke-linecap="round" fill="none"><path d="M5 8 L12.4 14.9" stroke-width="2.5"/><path d="M9.1 11.9 L7.6 13.4 M11 13.6 L9.7 14.9" stroke-width="1.6" stroke-linecap="butt"/></g><circle cx="3.3" cy="5.9" r="1" fill="#fff"/><g stroke="#3a8dd0" stroke-width="1.6" fill="none"><path d="M9.3 6.2 L14.7 0.9"/><path d="M10.6 0.9 H14.9 V5.1"/></g></svg><div class="t" style="left:342.50px;top:345.00px;font-size:12.5px;color:#4a4a4a;letter-spacing:-0.181px;">ORDER_DATE_KEY</div><svg class="a" style="left:323px;top:362.5px;" width="17" height="17" viewBox="0 0 17 17"><g fill="#3a8dd0"><circle cx="3.9" cy="6.6" r="3.9"/></g><g stroke="#3a8dd0" stroke-linecap="round" fill="none"><path d="M5 8 L12.4 14.9" stroke-width="2.5"/><path d="M9.1 11.9 L7.6 13.4 M11 13.6 L9.7 14.9" stroke-width="1.6" stroke-linecap="butt"/></g><circle cx="3.3" cy="5.9" r="1" fill="#fff"/><g stroke="#3a8dd0" stroke-width="1.6" fill="none"><path d="M9.3 6.2 L14.7 0.9"/><path d="M10.6 0.9 H14.9 V5.1"/></g></svg><div class="t" style="left:342.50px;top:364.00px;font-size:12.5px;color:#4a4a4a;letter-spacing:-0.125px;">ORDER_FLAGS_SK</div><svg class="a" style="left:323px;top:381.5px;" width="17" height="17" viewBox="0 0 17 17"><g fill="#3a8dd0"><circle cx="3.9" cy="6.6" r="3.9"/></g><g stroke="#3a8dd0" stroke-linecap="round" fill="none"><path d="M5 8 L12.4 14.9" stroke-width="2.5"/><path d="M9.1 11.9 L7.6 13.4 M11 13.6 L9.7 14.9" stroke-width="1.6" stroke-linecap="butt"/></g><circle cx="3.3" cy="5.9" r="1" fill="#fff"/><g stroke="#3a8dd0" stroke-width="1.6" fill="none"><path d="M9.3 6.2 L14.7 0.9"/><path d="M10.6 0.9 H14.9 V5.1"/></g></svg><div class="t" style="left:342.50px;top:383.00px;font-size:12.5px;color:#4a4a4a;letter-spacing:-0.197px;">PRODUCT_SK</div><svg class="a" style="left:323px;top:400.5px;" width="17" height="17" viewBox="0 0 17 17"><g fill="#3a8dd0"><circle cx="3.9" cy="6.6" r="3.9"/></g><g stroke="#3a8dd0" stroke-linecap="round" fill="none"><path d="M5 8 L12.4 14.9" stroke-width="2.5"/><path d="M9.1 11.9 L7.6 13.4 M11 13.6 L9.7 14.9" stroke-width="1.6" stroke-linecap="butt"/></g><circle cx="3.3" cy="5.9" r="1" fill="#fff"/><g stroke="#3a8dd0" stroke-width="1.6" fill="none"><path d="M9.3 6.2 L14.7 0.9"/><path d="M10.6 0.9 H14.9 V5.1"/></g></svg><div class="t" style="left:342.50px;top:402.00px;font-size:12.5px;color:#4a4a4a;letter-spacing:-0.060px;">PROMOTION_SK</div><svg class="a" style="left:323px;top:419.5px;" width="17" height="17" viewBox="0 0 17 17"><g fill="#3a8dd0"><circle cx="3.9" cy="6.6" r="3.9"/></g><g stroke="#3a8dd0" stroke-linecap="round" fill="none"><path d="M5 8 L12.4 14.9" stroke-width="2.5"/><path d="M9.1 11.9 L7.6 13.4 M11 13.6 L9.7 14.9" stroke-width="1.6" stroke-linecap="butt"/></g><circle cx="3.3" cy="5.9" r="1" fill="#fff"/><g stroke="#3a8dd0" stroke-width="1.6" fill="none"><path d="M9.3 6.2 L14.7 0.9"/><path d="M10.6 0.9 H14.9 V5.1"/></g></svg><div class="t" style="left:342.50px;top:421.00px;font-size:12.5px;color:#4a4a4a;letter-spacing:-0.005px;">SHIP_DATE_KEY</div><svg class="a" style="left:323px;top:438.5px;" width="17" height="17" viewBox="0 0 17 17"><g fill="#3a8dd0"><circle cx="3.9" cy="6.6" r="3.9"/></g><g stroke="#3a8dd0" stroke-linecap="round" fill="none"><path d="M5 8 L12.4 14.9" stroke-width="2.5"/><path d="M9.1 11.9 L7.6 13.4 M11 13.6 L9.7 14.9" stroke-width="1.6" stroke-linecap="butt"/></g><circle cx="3.3" cy="5.9" r="1" fill="#fff"/><g stroke="#3a8dd0" stroke-width="1.6" fill="none"><path d="M9.3 6.2 L14.7 0.9"/><path d="M10.6 0.9 H14.9 V5.1"/></g></svg><div class="t" style="left:342.50px;top:440.00px;font-size:12.5px;color:#4a4a4a;letter-spacing:-0.188px;">STORE_SK</div><div class="a" style="left:319px;top:458px;width:142px;height:2px;background:#d8d8d8"></div><svg class="a" style="left:326px;top:465px;" width="17" height="17" viewBox="0 0 17 17"><rect x="1.3" y="0.9" width="5" height="5" fill="#a9d2f2" stroke="#3a8dd0" stroke-width="1.2"/><path d="M1.3 5.9 V15.8 H4.2" fill="none" stroke="#3a8dd0" stroke-width="1.2"/><path d="M11.8 8.6 H6.6 L9.3 11.9 L6.6 15.2 H11.8" fill="none" stroke="#3a8dd0" stroke-width="1.3"/></svg><div class="t" style="left:342.50px;top:467.00px;font-size:12.5px;color:#4a4a4a;letter-spacing:0.633px;">Discount Amount</div><svg class="a" style="left:326px;top:484px;" width="17" height="17" viewBox="0 0 17 17"><rect x="1.3" y="0.9" width="5" height="5" fill="#a9d2f2" stroke="#3a8dd0" stroke-width="1.2"/><path d="M1.3 5.9 V15.8 H4.2" fill="none" stroke="#3a8dd0" stroke-width="1.2"/><path d="M11.8 8.6 H6.6 L9.3 11.9 L6.6 15.2 H11.8" fill="none" stroke="#3a8dd0" stroke-width="1.3"/></svg><div class="t" style="left:342.50px;top:486.00px;font-size:12.5px;color:#4a4a4a;letter-spacing:0.621px;">Extended Amount</div><svg class="a" style="left:326px;top:503px;" width="17" height="17" viewBox="0 0 17 17"><rect x="1.3" y="0.9" width="5" height="5" fill="#a9d2f2" stroke="#3a8dd0" stroke-width="1.2"/><path d="M1.3 5.9 V15.8 H4.2" fill="none" stroke="#3a8dd0" stroke-width="1.2"/><path d="M11.8 8.6 H6.6 L9.3 11.9 L6.6 15.2 H11.8" fill="none" stroke="#3a8dd0" stroke-width="1.3"/></svg><div class="t" style="left:342.50px;top:505.00px;font-size:12.5px;color:#4a4a4a;letter-spacing:0.660px;">Freight Amount</div><svg class="a" style="left:326px;top:522px;" width="10" height="17" viewBox="0 0 10 17"><rect x="1.2" y="0.7" width="6" height="15.6" rx="1.2" fill="#fff" stroke="#3a8dd0" stroke-width="1.2"/><rect x="1.8" y="1.3" width="4.8" height="3.6" fill="#9ecbee"/></svg><div class="t" style="left:342.50px;top:524.00px;font-size:12.5px;color:#4a4a4a;letter-spacing:0.531px;">Order Line Number</div><svg class="a" style="left:326px;top:541px;" width="10" height="17" viewBox="0 0 10 17"><rect x="1.2" y="0.7" width="6" height="15.6" rx="1.2" fill="#fff" stroke="#3a8dd0" stroke-width="1.2"/><rect x="1.8" y="1.3" width="4.8" height="3.6" fill="#9ecbee"/></svg><div class="t" style="left:342.50px;top:543.00px;font-size:12.5px;color:#4a4a4a;letter-spacing:0.628px;">Order Number</div><div class="a" style="left:528px;top:255px;width:129px;height:258px;background:#fff;border:2px solid #d6d6d6;box-sizing:border-box"></div><div class="a" style="left:530px;top:287px;width:125px;height:2px;background:#dcdcdc"></div><div class="a" style="left:530px;top:390px;width:125px;height:2px;background:#dcdcdc"></div><svg class="a" style="left:537px;top:264px;" width="16" height="16" viewBox="0 0 16 16"><rect x="0.7" y="0.7" width="14.6" height="14.6" rx="1" fill="#fff" stroke="#3a8dd0" stroke-width="1.3"/><rect x="1.3" y="1.3" width="13.4" height="3.6" fill="#b5daf4"/><path d="M0.7 5 H15.3 M5.33 5 V15.3 M10.67 5 V15.3" stroke="#3a8dd0" stroke-width="1.3"/></svg><div class="t" style="left:561.30px;top:266.00px;font-size:13px;color:#4d4d4d;letter-spacing:0.245px;">Dim Store</div><svg class="a" style="left:634px;top:267px;" width="11" height="8" viewBox="0 0 11 8"><path d="M1.5 6 L5.5 2 L9.5 6" fill="none" stroke="#b0b0b0" stroke-width="1"/></svg><svg class="a" style="left:537px;top:294.0px;" width="17" height="17" viewBox="0 0 17 17"><g fill="#3a8dd0"><circle cx="5.1" cy="5" r="5"/></g><g stroke="#3a8dd0" stroke-linecap="round" fill="none"><path d="M6.5 6.4 L15.2 15" stroke-width="2.8"/><path d="M11.2 10.9 L9.3 12.8 M13.5 13.2 L11.8 14.9" stroke-width="1.9" stroke-linecap="butt"/></g><circle cx="4.3" cy="4.2" r="1.15" fill="#fff"/></svg><div class="t" style="left:556.50px;top:296.00px;font-size:12.5px;color:#4a4a4a;letter-spacing:-0.148px;">STORE_NK</div><svg class="a" style="left:537px;top:313.0px;" width="17" height="17" viewBox="0 0 17 17"><g fill="#3a8dd0"><circle cx="5.1" cy="5" r="5"/></g><g stroke="#3a8dd0" stroke-linecap="round" fill="none"><path d="M6.5 6.4 L15.2 15" stroke-width="2.8"/><path d="M11.2 10.9 L9.3 12.8 M13.5 13.2 L11.8 14.9" stroke-width="1.9" stroke-linecap="butt"/></g><circle cx="4.3" cy="4.2" r="1.15" fill="#fff"/></svg><div class="t" style="left:556.50px;top:315.00px;font-size:12.5px;color:#4a4a4a;letter-spacing:-0.188px;">STORE_SK</div><svg class="a" style="left:537px;top:332.5px;" width="17" height="17" viewBox="0 0 17 17"><g fill="#3a8dd0"><circle cx="3.9" cy="6.6" r="3.9"/></g><g stroke="#3a8dd0" stroke-linecap="round" fill="none"><path d="M5 8 L12.4 14.9" stroke-width="2.5"/><path d="M9.1 11.9 L7.6 13.4 M11 13.6 L9.7 14.9" stroke-width="1.6" stroke-linecap="butt"/></g><circle cx="3.3" cy="5.9" r="1" fill="#fff"/><g stroke="#3a8dd0" stroke-width="1.6" fill="none"><path d="M9.3 6.2 L14.7 0.9"/><path d="M10.6 0.9 H14.9 V5.1"/></g></svg><div class="t" style="left:556.50px;top:334.00px;font-size:12.5px;color:#4a4a4a;letter-spacing:0.054px;">CITY_SK</div><svg class="a" style="left:537px;top:351.5px;" width="17" height="17" viewBox="0 0 17 17"><g fill="#3a8dd0"><circle cx="3.9" cy="6.6" r="3.9"/></g><g stroke="#3a8dd0" stroke-linecap="round" fill="none"><path d="M5 8 L12.4 14.9" stroke-width="2.5"/><path d="M9.1 11.9 L7.6 13.4 M11 13.6 L9.7 14.9" stroke-width="1.6" stroke-linecap="butt"/></g><circle cx="3.3" cy="5.9" r="1" fill="#fff"/><g stroke="#3a8dd0" stroke-width="1.6" fill="none"><path d="M9.3 6.2 L14.7 0.9"/><path d="M10.6 0.9 H14.9 V5.1"/></g></svg><div class="t" style="left:556.50px;top:353.00px;font-size:12.5px;color:#4a4a4a;letter-spacing:0.191px;">DISTRICT_SK</div><svg class="a" style="left:537px;top:370.5px;" width="17" height="17" viewBox="0 0 17 17"><g fill="#3a8dd0"><circle cx="3.9" cy="6.6" r="3.9"/></g><g stroke="#3a8dd0" stroke-linecap="round" fill="none"><path d="M5 8 L12.4 14.9" stroke-width="2.5"/><path d="M9.1 11.9 L7.6 13.4 M11 13.6 L9.7 14.9" stroke-width="1.6" stroke-linecap="butt"/></g><circle cx="3.3" cy="5.9" r="1" fill="#fff"/><g stroke="#3a8dd0" stroke-width="1.6" fill="none"><path d="M9.3 6.2 L14.7 0.9"/><path d="M10.6 0.9 H14.9 V5.1"/></g></svg><div class="t" style="left:556.50px;top:372.00px;font-size:12.5px;color:#4a4a4a;letter-spacing:0.039px;">OPEN_DATE_...</div><svg class="a" style="left:540px;top:397px;" width="10" height="17" viewBox="0 0 10 17"><rect x="1.2" y="0.7" width="6" height="15.6" rx="1.2" fill="#fff" stroke="#3a8dd0" stroke-width="1.2"/><rect x="1.8" y="1.3" width="4.8" height="3.6" fill="#9ecbee"/></svg><div class="t" style="left:556.50px;top:399.00px;font-size:12.5px;color:#4a4a4a;letter-spacing:0.617px;">City</div><svg class="a" style="left:540px;top:416px;" width="10" height="17" viewBox="0 0 10 17"><rect x="1.2" y="0.7" width="6" height="15.6" rx="1.2" fill="#fff" stroke="#3a8dd0" stroke-width="1.2"/><rect x="1.8" y="1.3" width="4.8" height="3.6" fill="#9ecbee"/></svg><div class="t" style="left:556.50px;top:418.00px;font-size:12.5px;color:#4a4a4a;letter-spacing:0.605px;">Country</div><svg class="a" style="left:540px;top:435px;" width="10" height="17" viewBox="0 0 10 17"><rect x="1.2" y="0.7" width="6" height="15.6" rx="1.2" fill="#fff" stroke="#3a8dd0" stroke-width="1.2"/><rect x="1.8" y="1.3" width="4.8" height="3.6" fill="#9ecbee"/></svg><div class="t" style="left:556.50px;top:437.00px;font-size:12.5px;color:#4a4a4a;letter-spacing:0.479px;">State Province</div><svg class="a" style="left:540px;top:454px;" width="10" height="17" viewBox="0 0 10 17"><rect x="1.2" y="0.7" width="6" height="15.6" rx="1.2" fill="#fff" stroke="#3a8dd0" stroke-width="1.2"/><rect x="1.8" y="1.3" width="4.8" height="3.6" fill="#9ecbee"/></svg><div class="t" style="left:556.50px;top:456.00px;font-size:12.5px;color:#4a4a4a;letter-spacing:0.561px;">Store Name</div><svg class="a" style="left:540px;top:473px;" width="10" height="17" viewBox="0 0 10 17"><rect x="1.2" y="0.7" width="6" height="15.6" rx="1.2" fill="#fff" stroke="#3a8dd0" stroke-width="1.2"/><rect x="1.8" y="1.3" width="4.8" height="3.6" fill="#9ecbee"/></svg><div class="t" style="left:556.50px;top:475.00px;font-size:12.5px;color:#4a4a4a;letter-spacing:0.597px;">Store Nk</div><svg class="a" style="left:540px;top:492px;" width="10" height="17" viewBox="0 0 10 17"><rect x="1.2" y="0.7" width="6" height="15.6" rx="1.2" fill="#fff" stroke="#3a8dd0" stroke-width="1.2"/><rect x="1.8" y="1.3" width="4.8" height="3.6" fill="#9ecbee"/></svg><div class="t" style="left:556.50px;top:494.00px;font-size:12.5px;color:#4a4a4a;letter-spacing:0.633px;">Store Sk</div><div class="a" style="left:86px;top:523px;width:153px;height:140px;background:#fff;border:2px solid #d6d6d6;box-sizing:border-box"></div><div class="a" style="left:88px;top:554.5px;width:149px;height:2px;background:#dcdcdc"></div><svg class="a" style="left:95px;top:532px;" width="16" height="16" viewBox="0 0 16 16"><rect x="0.7" y="0.7" width="14.6" height="14.6" rx="1" fill="#fff" stroke="#3a8dd0" stroke-width="1.3"/><rect x="1.3" y="1.3" width="13.4" height="3.6" fill="#b5daf4"/><path d="M0.7 5 H15.3 M5.33 5 V15.3 M10.67 5 V15.3" stroke="#3a8dd0" stroke-width="1.3"/></svg><div class="t" style="left:119.60px;top:533.00px;font-size:13px;color:#4d4d4d;letter-spacing:0.163px;">Dim Employee</div><svg class="a" style="left:216px;top:535px;" width="11" height="8" viewBox="0 0 11 8"><path d="M1.5 6 L5.5 2 L9.5 6" fill="none" stroke="#b0b0b0" stroke-width="1"/></svg><svg class="a" style="left:95px;top:562.0px;" width="17" height="17" viewBox="0 0 17 17"><g fill="#3a8dd0"><circle cx="5.1" cy="5" r="5"/></g><g stroke="#3a8dd0" stroke-linecap="round" fill="none"><path d="M6.5 6.4 L15.2 15" stroke-width="2.8"/><path d="M11.2 10.9 L9.3 12.8 M13.5 13.2 L11.8 14.9" stroke-width="1.9" stroke-linecap="butt"/></g><circle cx="4.3" cy="4.2" r="1.15" fill="#fff"/></svg><div class="t" style="left:114.30px;top:564.00px;font-size:12.5px;color:#4a4a4a;letter-spacing:-0.393px;">EMPLOYEE_NK</div><svg class="a" style="left:95px;top:581.0px;" width="17" height="17" viewBox="0 0 17 17"><g fill="#3a8dd0"><circle cx="5.1" cy="5" r="5"/></g><g stroke="#3a8dd0" stroke-linecap="round" fill="none"><path d="M6.5 6.4 L15.2 15" stroke-width="2.8"/><path d="M11.2 10.9 L9.3 12.8 M13.5 13.2 L11.8 14.9" stroke-width="1.9" stroke-linecap="butt"/></g><circle cx="4.3" cy="4.2" r="1.15" fill="#fff"/></svg><div class="t" style="left:114.30px;top:583.00px;font-size:12.5px;color:#4a4a4a;letter-spacing:-0.385px;">EMPLOYEE_SK</div><svg class="a" style="left:95px;top:600.5px;" width="17" height="17" viewBox="0 0 17 17"><g fill="#3a8dd0"><circle cx="3.9" cy="6.6" r="3.9"/></g><g stroke="#3a8dd0" stroke-linecap="round" fill="none"><path d="M5 8 L12.4 14.9" stroke-width="2.5"/><path d="M9.1 11.9 L7.6 13.4 M11 13.6 L9.7 14.9" stroke-width="1.6" stroke-linecap="butt"/></g><circle cx="3.3" cy="5.9" r="1" fill="#fff"/><g stroke="#3a8dd0" stroke-width="1.6" fill="none"><path d="M9.3 6.2 L14.7 0.9"/><path d="M10.6 0.9 H14.9 V5.1"/></g></svg><div class="t" style="left:114.30px;top:602.00px;font-size:12.5px;color:#4a4a4a;letter-spacing:-0.096px;">HIRE_DATE_KEY</div></div></div></div>
<div class="a" style="left:0;top:0;width:1487px;height:646px;border-right:1px solid #9c9c9c;border-bottom:1px solid #9c9c9c;border-radius:0 0 7px 7px;box-sizing:border-box"></div>
</body></html>
